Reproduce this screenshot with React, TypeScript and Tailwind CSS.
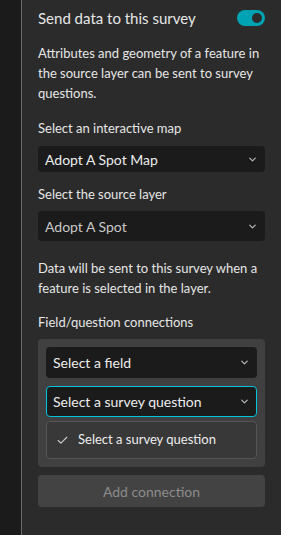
import { Check, ChevronDown } from 'lucide-react'

function Select({ label, muted, tall }: { label: string; muted?: boolean; tall?: boolean }) {
  return (
    <div
      className={`flex items-center justify-between rounded-sm bg-[#1b1b1b] pl-[7px] pr-[7px] ${tall ? 'h-[30px]' : 'h-[26px]'}`}
    >
      <span className={muted ? 'text-[#c8c8c8]' : 'text-[#ededed]'}>{label}</span>
      <ChevronDown className="h-[11px] w-[11px] text-[#bdbdbd]" strokeWidth={2.5} />
    </div>
  )
}

export default function App() {
  return (
    <div
      className="flex h-[535px] w-[281px] overflow-hidden bg-[#2b2b2b] text-[14px] text-[#e6e6e6]"
      style={{ fontFamily: 'Lato, "Noto Sans", sans-serif' }}
    >
      <div className="w-[21px] shrink-0 bg-[#1b1b1b]" />
      <div className="w-px shrink-0 bg-[#6b6b6b]" />
      <div className="flex flex-1 flex-col px-4 pt-[8px]">
        <div className="flex h-[20px] items-center justify-between">
          <span className="text-[15px]">Send data to this survey</span>
          <span className="flex h-4 w-7 items-center justify-end rounded-full bg-[#00a3b4] pr-[3px]">
            <span className="h-[10px] w-[10px] rounded-full bg-[#2b2b2b]" />
          </span>
        </div>

        <p className="mt-[15px] text-[13px] leading-5">
          Attributes and geometry of a feature in the source layer can be sent to survey questions.
        </p>

        <p className="mt-[15px] text-[13px] leading-5">Select an interactive map</p>
        <div className="mt-[8px]">
          <Select label="Adopt A Spot Map" />
        </div>

        <p className="mt-[12px] text-[13px] leading-5">Select the source layer</p>
        <div className="mt-[7px]">
          <Select label="Adopt A Spot" muted tall />
        </div>

        <p className="mt-[17px] text-[13px] leading-5">
          Data will be sent to this survey when a feature is selected in the layer.
        </p>

        <p className="mt-[14px] text-[13px] leading-5">Field/question connections</p>

        <div className="mt-[7px] flex flex-col rounded-sm bg-[#404040] p-2">
          <div className="flex h-[31px] items-center justify-between rounded-sm bg-[#1b1b1b] pl-[7px] pr-[7px]">
            <span className="text-[#ededed]">Select a field</span>
            <ChevronDown className="h-[11px] w-[11px] text-[#bdbdbd]" strokeWidth={2.5} />
          </div>
          <div className="mt-2 flex h-[31px] items-center justify-between rounded-sm border border-[#00c4de] bg-[#1b1b1b] pl-[6px] pr-[6px]">
            <span className="text-[#ededed]">Select a survey question</span>
            <ChevronDown className="h-[11px] w-[11px] text-[#bdbdbd]" strokeWidth={2.5} />
          </div>
          <div className="mt-1 flex h-[38px] items-center gap-[9px] rounded-sm border border-[#555555] bg-[#383838] pl-[9px]">
            <Check className="h-[13px] w-[13px] text-[#cfcfcf]" strokeWidth={2} />
            <span className="text-[13px] text-[#ededed]">Select a survey question</span>
          </div>
        </div>

        <button className="mt-2 h-[32px] rounded-sm bg-[#434343] text-[#8c8c8c]">Add connection</button>
      </div>
    </div>
  )
}
